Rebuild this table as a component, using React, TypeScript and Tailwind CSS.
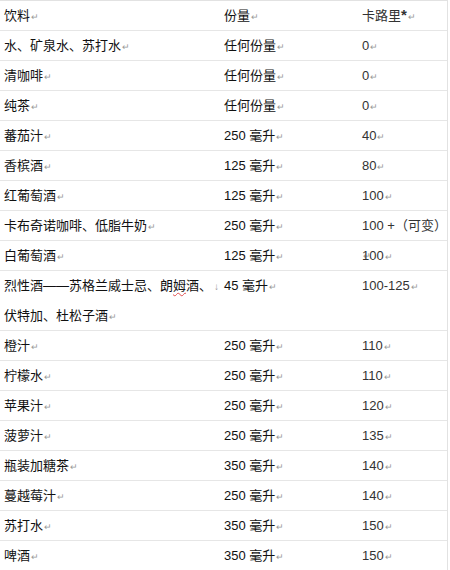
import React from "react";

type Row = { a: React.ReactNode; b: React.ReactNode; c: React.ReactNode; tall?: boolean };

const R = () => <span className="text-[9px] text-[#999] ml-[1px] align-baseline">↵</span>;

const rows: Row[] = [
  { a: "饮料", b: "份量", c: <>卡路里<span className="text-[15px] font-bold leading-none">*</span></> },
  { a: "水、矿泉水、苏打水", b: "任何份量", c: "0" },
  { a: "清咖啡", b: "任何份量", c: "0" },
  { a: "纯茶", b: "任何份量", c: "0" },
  { a: "蕃茄汁", b: "250 毫升", c: "40" },
  { a: "香槟酒", b: "125 毫升", c: "80" },
  { a: "红葡萄酒", b: "125 毫升", c: "100" },
  { a: "卡布奇诺咖啡、低脂牛奶", b: "250 毫升", c: "100 +（可变）" },
  { a: "白葡萄酒", b: "125 毫升", c: "100" },
  {
    a: (
      <>
        <span className="whitespace-nowrap">
          烈性酒——苏格兰威士忌、朗
          <span className="underline decoration-wavy decoration-[#e05050] decoration-1 underline-offset-2">姆</span>
          酒、<span className="text-[10px] text-[#999] ml-[2px]">↓</span>
        </span>
        <br />
        伏特加、杜松子酒
      </>
    ),
    b: "45 毫升",
    c: "100-125",
    tall: true,
  },
  { a: "橙汁", b: "250 毫升", c: "110" },
  { a: "柠檬水", b: "250 毫升", c: "110" },
  { a: "苹果汁", b: "250 毫升", c: "120" },
  { a: "菠萝汁", b: "250 毫升", c: "135" },
  { a: "瓶装加糖茶", b: "350 毫升", c: "140" },
  { a: "蔓越莓汁", b: "250 毫升", c: "140" },
  { a: "苏打水", b: "350 毫升", c: "150" },
  { a: "啤酒", b: "350 毫升", c: "150" },
];

export default function App() {
  return (
    <div
      className="w-[450px] h-[570px] bg-white overflow-hidden text-[13px] text-[#111]"
      style={{ fontFamily: '"Liberation Sans", "Noto Sans CJK SC", sans-serif' }}
    >
      <div className="w-[448px] border-r border-t border-[#e2e2e2]">
        {rows.map((r, i) => (
          <div
            key={i}
            className={`flex border-b border-[#e6e6e6] leading-[29px] ${r.tall ? "h-[60px]" : "h-[30px]"}`}
          >
            <div className="w-[220px] pl-[4px] shrink-0">
              {r.a}
              <R />
            </div>
            <div className="w-[138px] pl-[4px] shrink-0">
              {r.b}
              <R />
            </div>
            <div className="flex-1 pl-[4px] text-[#333]">
              {r.c}
              <R />
            </div>
          </div>
        ))}
      </div>
    </div>
  );
}
